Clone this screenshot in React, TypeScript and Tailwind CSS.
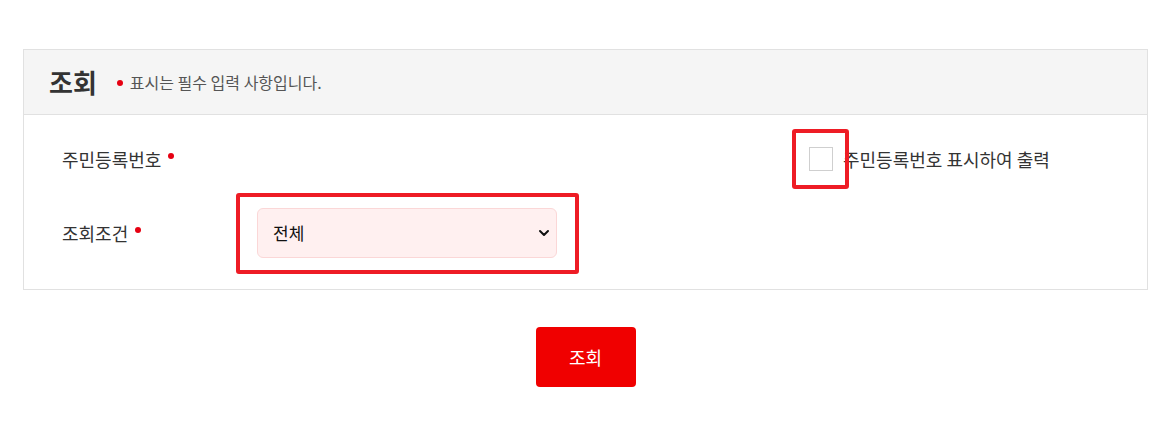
import { ChevronDown } from 'lucide-react';

const font = { fontFamily: '"Noto Sans CJK KR", "Noto Sans", sans-serif' };

function Dot({ className = '' }: { className?: string }) {
  return <span className={`inline-block h-[6px] w-[6px] rounded-full bg-[#e60012] ${className}`} />;
}

export default function App() {
  return (
    <div className="min-h-[429px] bg-white pt-[49px] pl-[23px] text-[#333]" style={font}>
      <div className="w-[1125px]">
        <section className="border border-[#e1e1e1]">
          <div className="flex h-[65px] items-center border-b border-[#e1e1e1] bg-[#f5f5f5] pl-[25px]">
            <h2 className="text-[26px] font-bold leading-none text-[#333]">조회</h2>
            <Dot className="ml-[20px] mt-[2px]" />
            <span className="ml-[7px] text-[16px] text-[#555]">표시는 필수 입력 사항입니다.</span>
          </div>

          <div className="pt-[20px] pb-[31px] pl-[38px]">
            <div className="flex h-[48px] items-center">
              <div className="flex w-[747px] items-center text-[18px]">
                주민등록번호
                <Dot className="ml-[7px] -mt-[6px]" />
              </div>
              <label className="flex items-center">
                <span className="relative">
                  <input
                    type="checkbox"
                    className="block h-[24px] w-[24px] appearance-none border border-[#cfcfcf] bg-white"
                  />
                  <span className="pointer-events-none absolute -left-[17px] -top-[18px] h-[60px] w-[57px] rounded-[3px] border-[4px] border-[#ee1c25]" />
                </span>
                <span className="ml-[10px] text-[18px]">주민등록번호 표시하여 출력</span>
              </label>
            </div>

            <div className="mt-[25px] flex h-[50px] items-center">
              <div className="flex w-[195px] items-center text-[18px]">
                조회조건
                <Dot className="ml-[7px] -mt-[6px]" />
              </div>
              <div className="relative">
                <div className="relative h-[50px] w-[300px]">
                  <select className="h-full w-full appearance-none rounded-[6px] border border-[#fbd7d7] bg-[#fff0f0] pl-[15px] text-[17px] text-[#111] outline-none">
                    <option>전체</option>
                  </select>
                  <ChevronDown
                    className="pointer-events-none absolute right-[5px] top-[17px] h-[16px] w-[16px] text-[#111]"
                    strokeWidth={3}
                  />
                </div>
                <span className="pointer-events-none absolute -left-[21px] -top-[15px] h-[81px] w-[343px] rounded-[3px] border-[4px] border-[#ee1c25]" />
              </div>
            </div>
          </div>
        </section>

        <div className="mt-[37px] flex justify-center">
          <button className="h-[60px] w-[100px] rounded-[4px] bg-[#f00000] text-[18px] text-white">조회</button>
        </div>
      </div>
    </div>
  );
}
